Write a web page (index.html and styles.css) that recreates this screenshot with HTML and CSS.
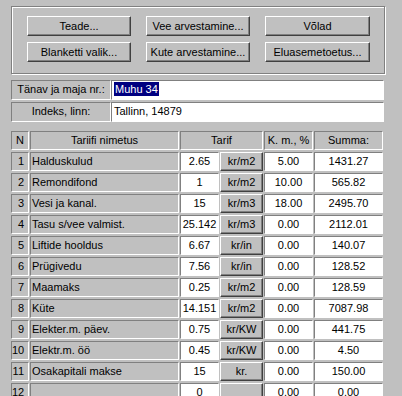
FILE: index.html
```html
<!DOCTYPE html>
<html lang="et">
<head>
    <meta charset="UTF-8">
    <title>Arvestus</title>
    <link rel="stylesheet" href="styles.css">
</head>
<body>
    <div class="window">
        <div class="group">
            <button class="btn">Teade...</button>
            <button class="btn">Vee arvestamine...</button>
            <button class="btn">Võlad</button>
            <button class="btn">Blanketti valik...</button>
            <button class="btn">Kute arvestamine...</button>
            <button class="btn">Eluasemetoetus...</button>
        </div>

        <div class="fields">
            <div class="field-row">
                <div class="field-label">Tänav ja maja nr.:</div>
                <div class="field-input"><span class="selected">Muhu 34</span></div>
            </div>
            <div class="field-row">
                <div class="field-label">Indeks, linn:</div>
                <div class="field-input">Tallinn, 14879</div>
            </div>
        </div>

        <div class="tariffs">
            <div class="cell head">N</div>
            <div class="cell head">Tariifi nimetus</div>
            <div class="cell head head--wide">Tarif</div>
            <div class="cell head">K. m., %</div>
            <div class="cell head">Summa:</div>

            <div class="cell num">1</div><div class="cell name">Halduskulud</div><div class="cell value">2.65</div><div class="unit">kr/m2</div><div class="cell value">5.00</div><div class="cell value">1431.27</div>
            <div class="cell num">2</div><div class="cell name">Remondifond</div><div class="cell value">1</div><div class="unit">kr/m2</div><div class="cell value">10.00</div><div class="cell value">565.82</div>
            <div class="cell num">3</div><div class="cell name">Vesi ja kanal.</div><div class="cell value">15</div><div class="unit">kr/m3</div><div class="cell value">18.00</div><div class="cell value">2495.70</div>
            <div class="cell num">4</div><div class="cell name">Tasu s/vee valmist.</div><div class="cell value">25.142</div><div class="unit">kr/m3</div><div class="cell value">0.00</div><div class="cell value">2112.01</div>
            <div class="cell num">5</div><div class="cell name">Liftide hooldus</div><div class="cell value">6.67</div><div class="unit">kr/in</div><div class="cell value">0.00</div><div class="cell value">140.07</div>
            <div class="cell num">6</div><div class="cell name">Prügivedu</div><div class="cell value">7.56</div><div class="unit">kr/in</div><div class="cell value">0.00</div><div class="cell value">128.52</div>
            <div class="cell num">7</div><div class="cell name">Maamaks</div><div class="cell value">0.25</div><div class="unit">kr/m2</div><div class="cell value">0.00</div><div class="cell value">128.59</div>
            <div class="cell num">8</div><div class="cell name">Küte</div><div class="cell value">14.151</div><div class="unit">kr/m2</div><div class="cell value">0.00</div><div class="cell value">7087.98</div>
            <div class="cell num">9</div><div class="cell name">Elekter.m. päev.</div><div class="cell value">0.75</div><div class="unit">kr/KW</div><div class="cell value">0.00</div><div class="cell value">441.75</div>
            <div class="cell num">10</div><div class="cell name">Elektr.m. öö</div><div class="cell value">0.45</div><div class="unit">kr/KW</div><div class="cell value">0.00</div><div class="cell value">4.50</div>
            <div class="cell num">11</div><div class="cell name">Osakapitali makse</div><div class="cell value">15</div><div class="unit">kr.</div><div class="cell value">0.00</div><div class="cell value">150.00</div>
            <div class="cell num">12</div><div class="cell name"></div><div class="cell value">0</div><div class="unit"></div><div class="cell value">0.00</div><div class="cell value">0.00</div>
        </div>
    </div>
</body>
</html>
```

FILE: styles.css
```css
:root {
    --face: #c0c0c0;
    --shadow: #808080;
    --dark: #404040;
    --light: #ffffff;
    --font-base: "Liberation Sans Narrow", "Liberation Sans", Arial, sans-serif;
}

* {
    box-sizing: border-box;
}

html, body {
    margin: 0;
    padding: 0;
    height: 100%;
    overflow: hidden;
}

body {
    background: var(--face);
    font-family: var(--font-base);
    font-size: 11px;
    color: #000;
}

.window {
    padding: 6px 0 0 11px;
}

/* Grupp nuppudega */
.group {
    width: 374px;
    height: 68px;
    border: 1px solid var(--shadow);
    box-shadow: inset 1px 1px var(--light), 1px 1px var(--light);
    padding: 9px 0 0 15px;
    display: grid;
    grid-template-columns: 104px 104px 105px;
    grid-auto-rows: 20px;
    column-gap: 15px;
    row-gap: 6px;
    align-content: start;
}

.btn {
    margin: 0;
    padding: 0;
    font-family: var(--font-base);
    font-size: 11px;
    color: #000;
    background: var(--face);
    border: 1px solid;
    border-color: var(--light) var(--dark) var(--dark) var(--light);
    box-shadow: inset -1px -1px var(--shadow);
    text-align: center;
}

/* Aadressi väljad */
.fields {
    margin-top: 6px;
    display: flex;
    flex-direction: column;
    gap: 2px;
}

.field-row {
    display: flex;
    height: 20px;
}

.field-label,
.field-input,
.cell {
    border: 1px solid;
    border-color: var(--shadow) var(--light) var(--light) var(--shadow);
    white-space: nowrap;
    overflow: hidden;
}

.field-label {
    width: 100px;
    text-align: center;
    line-height: 17px;
}

.field-input {
    width: 273px;
    background: var(--light);
    padding-left: 2px;
    line-height: 17px;
}

.selected {
    display: inline-block;
    background: #000080;
    color: var(--light);
    line-height: 14px;
    padding: 0 1px;
}

/* Tariifide tabel */
.tariffs {
    margin-top: 9px;
    display: grid;
    grid-template-columns: 18px 149px 39px 43px 49px 69px;
    grid-auto-rows: 19px;
    column-gap: 1px;
    row-gap: 2px;
}

.cell {
    line-height: 16px;
}

.head {
    text-align: center;
}

.head--wide {
    grid-column: span 2;
}

.num {
    text-align: right;
    padding-right: 4px;
}

.name {
    padding-left: 1px;
}

.value {
    background: var(--light);
    text-align: center;
}

.unit {
    border: 1px solid;
    border-color: var(--light) var(--dark) var(--dark) var(--light);
    box-shadow: inset -1px -1px var(--shadow);
    text-align: center;
    line-height: 17px;
    white-space: nowrap;
}
```
